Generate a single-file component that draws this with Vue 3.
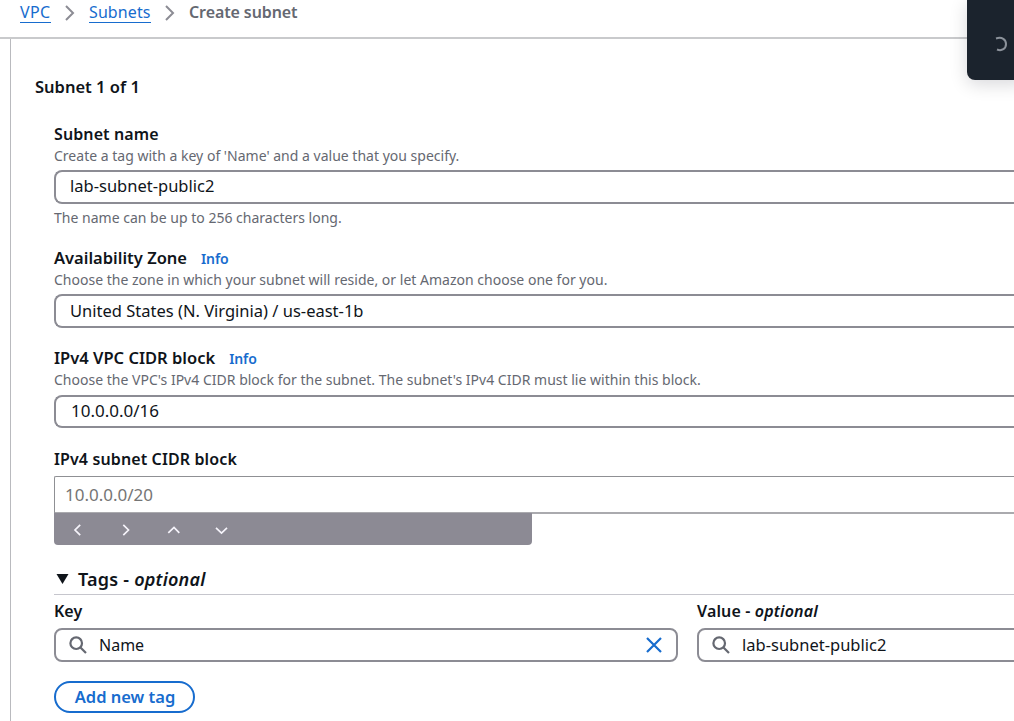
<script setup>
const fields = [
  { id: 'name', label: 'Subnet name', hint: "Create a tag with a key of 'Name' and a value that you specify.", value: 'lab-subnet-public2', note: 'The name can be up to 256 characters long.' },
  { id: 'zone', label: 'Availability Zone', info: true, hint: 'Choose the zone in which your subnet will reside, or let Amazon choose one for you.', value: 'United States (N. Virginia) / us-east-1b' },
  { id: 'block', label: 'IPv4 VPC CIDR block', info: true, hint: "Choose the VPC's IPv4 CIDR block for the subnet. The subnet's IPv4 CIDR must lie within this block.", value: '10.0.0.0/16' },
]
const arrows = [
  { id: 'left', d: 'M10.2 2.8 L5 8 L10.2 13.2' },
  { id: 'right', d: 'M5.3 2.8 L10.5 8 L5.3 13.2' },
  { id: 'up', d: 'M2.3 10.8 L8 5.5 L13.3 10.8' },
  { id: 'down', d: 'M2 5.8 L7.5 11 L13 5.8' },
]
</script>

<template>
  <div class="page">
    <header class="crumbs">
      <a class="vpc">VPC</a>
      <svg class="sep" viewBox="0 0 10 16"><path d="M1 1 L8 8 L1 15" /></svg>
      <a class="subnets">Subnets</a>
      <svg class="sep" viewBox="0 0 10 16"><path d="M1 1 L8 8 L1 15" /></svg>
      <b class="current">Create subnet</b>
    </header>
    <main class="panel">
      <h2>Subnet 1 of 1</h2>
      <section v-for="f in fields" :key="f.id" class="field" :class="f.id">
        <div class="label"><span class="title">{{ f.label }}</span><a v-if="f.info" class="info">Info</a></div>
        <div class="hint">{{ f.hint }}</div>
        <div class="input"><span class="text">{{ f.value }}</span></div>
        <div v-if="f.note" class="note">{{ f.note }}</div>
      </section>
      <section class="field cidr">
        <div class="label"><span class="title">IPv4 subnet CIDR block</span></div>
        <div class="plain">10.0.0.0/20</div>
        <div class="stepper">
          <svg v-for="a in arrows" :key="a.id" viewBox="0 0 16 16"><path :d="a.d" /></svg>
        </div>
      </section>
      <section class="tags">
        <div class="tags-head">
          <svg viewBox="0 0 14 12"><path d="M.5 1 H12.5 L6.5 11 Z" /></svg>
          <span>Tags - <i>optional</i></span>
        </div>
        <div class="cols">
          <div class="col key">
            <div class="label">Key</div>
            <div class="input search">
              <svg class="lens" viewBox="0 0 18 18"><circle cx="7.2" cy="7.2" r="5.8" /><path d="M11.5 11.5 L17 17" /></svg>
              <span>Name</span>
              <svg class="clear" viewBox="0 0 16 16"><path d="M1 1 L15 15 M15 1 L1 15" /></svg>
            </div>
          </div>
          <div class="col val">
            <div class="label"><span>Value - <i>optional</i></span></div>
            <div class="input search">
              <svg class="lens" viewBox="0 0 18 18"><circle cx="7.2" cy="7.2" r="5.8" /><path d="M11.5 11.5 L17 17" /></svg>
              <span class="text">lab-subnet-public2</span>
            </div>
          </div>
        </div>
        <button>Add new tag</button>
      </section>
    </main>
    <aside class="toast">
      <svg viewBox="0 0 14 16"><path d="M2 2.5 C8 .5 12 3.5 12 8 C12 12.5 8 15.5 3 13.5" /></svg>
    </aside>
  </div>
</template>

<style>
html, body { margin: 0; overflow: hidden; background: #fff; }
</style>
<style scoped>
* { box-sizing: border-box; }
.page { position: relative; width: 1014px; height: 721px; overflow: hidden; background: #fff; color: #0f141a; font: 16px/22px "Noto Sans", "Open Sans", sans-serif; white-space: nowrap; }
.crumbs { display: flex; height: 39px; padding: 1px 0 0 20px; align-items: flex-start; border-bottom: 2px solid #c9cacc; }
.crumbs a { color: #176cce; height: 22px; border-bottom: 1px solid #176cce; }
.vpc { width: 31px; letter-spacing: .3px; }
.subnets { width: 62px; letter-spacing: .1px; }
.sep { width: 10px; height: 16px; margin: 4px 14px 0; fill: none; stroke: #8c8c94; stroke-width: 2; }
.current { color: #656871; font-weight: 600; letter-spacing: -.1px; }
.panel { height: 682px; margin-left: 10px; border-left: 1px solid #b9babe; padding: 37px 0 0 43px; }
h2 { margin: 0 0 25px -19px; font-size: 16.5px; line-height: 22px; font-weight: 600; }
.label { height: 22px; display: flex; font-weight: 600; }
.name .title { letter-spacing: .1px; }
.zone .title, .block .title { font-size: 16.5px; }
.cidr .title { letter-spacing: .12px; }
.info { color: #176cce; font-size: 14px; letter-spacing: -.1px; margin-left: 14px; padding-top: 1px; }
.hint, .note { height: 22px; font-size: 14px; color: #656871; letter-spacing: .01px; }
.note { margin-top: 3px; }
.input { height: 34px; margin-top: 3px; padding-left: 14px; border: 2px solid #8c8c94; border-radius: 8px; display: flex; align-items: center; }
.text { font-size: 16.5px; }
.block .text { font-size: 17px; padding-left: 1px; margin-top: -2px; }
.field .input { border-right: 0; border-radius: 8px 0 0 8px; }
.name { margin-bottom: 18px; }
.name .text { margin-top: -2px; }
.zone { margin-bottom: 19px; }
.block .input { margin-top: 4px; height: 33px; }
.cidr { margin-top: 20px; }
.plain { height: 38px; margin-top: 6px; padding: 7px 10px; border: 1px solid #8f9094; border-right: 0; border-bottom: 2px solid #aaaaae; border-radius: 2px 0 0 0; color: #757575; font-size: 17px; }
.stepper { width: 478px; height: 32px; margin-top: -1px; position: relative; background: #8c8a94; border-radius: 0 0 4px 4px; display: flex; align-items: center; gap: 32px; padding: 2px 0 0 16px; }
.stepper svg { width: 16px; height: 16px; fill: none; stroke: #f6f4fb; stroke-width: 1.7; }
.tags-head { height: 29px; margin-top: 21px; padding: 0 0 2px 2px; border-bottom: 1px solid #c6c6cd; display: flex; align-items: center; font-size: 18px; font-weight: 600; letter-spacing: .22px; }
.tags-head svg { width: 14px; height: 12px; margin-right: 8px; fill: #0f141a; }
.cols { display: flex; gap: 19px; padding-top: 5px; }
.key { width: 624px; flex: none; }
.val { width: 340px; flex: none; }
.val .label { letter-spacing: .14px; }
.search { margin-top: 6px; height: 34px; padding-left: 13px; }
.lens { width: 18px; height: 18px; margin-right: 12px; fill: none; stroke: #656871; stroke-width: 2.2; }
.clear { width: 16px; height: 16px; margin: 0 14px 0 auto; fill: none; stroke: #176cce; stroke-width: 2.2; }
button { display: block; margin: 19px 0 0; padding: 0 0 0 1px; width: 141px; height: 32px; border: 2px solid #176cce; border-radius: 16px; background: #fff; color: #176cce; font: 600 16.5px/22px "Noto Sans", sans-serif; }
.toast { position: absolute; left: 967px; top: 0; width: 60px; height: 80px; background: #1b232d; border-radius: 0 0 8px 8px; box-shadow: 0 4px 18px rgba(0, 7, 22, .16); padding: 35px 0 0 27px; }
.toast svg { width: 14px; height: 16px; fill: none; stroke: #8c929b; stroke-width: 2; }
</style>
